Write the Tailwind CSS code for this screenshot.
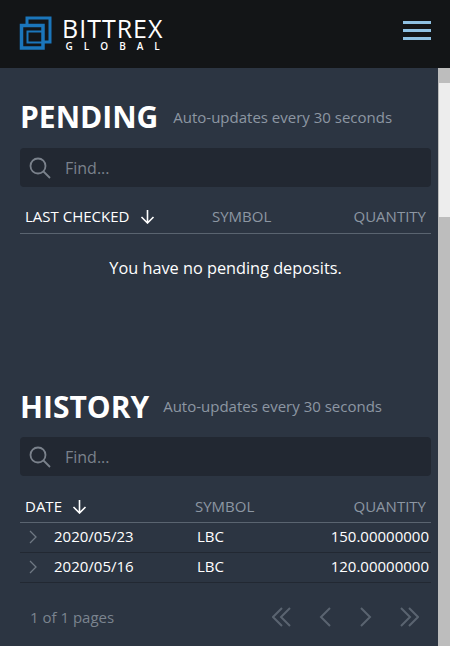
<!DOCTYPE html>
<html lang="en">
<head>
    <meta charset="UTF-8">
    <meta name="viewport" content="width=device-width, initial-scale=1.0">
    <title>Deposits</title>
    <script src="https://cdn.jsdelivr.net/npm/@tailwindcss/browser@4"></script>
</head>
<body class="bg-[#2c3542] font-['Open_Sans',sans-serif] overflow-hidden">
    <div class="w-[450px] h-[646px] flex flex-col overflow-hidden">
        <header class="h-[68px] shrink-0 bg-[#131517] flex items-center justify-between pl-[19px] pr-[20px]">
            <div class="flex items-center gap-[10px]">
                <svg width="33" height="34" viewBox="0 0 33 34" fill="none" stroke="#1b76bb" class="mt-[-3px]">
                    <path d="M8 8V2h23v24h-7" stroke-width="3"/>
                    <path d="M2.500 9.500h21.500v22.500H2.500z" stroke-width="3.500"/>
                    <path d="M24 15.500H8.500V26.500H24" stroke-width="2"/>
                </svg>
                <div class="flex flex-col items-center text-white mt-[-2px]">
                    <span class="text-[25px] leading-[26px] font-normal tracking-[1px]">BITTREX</span>
                    <span class="text-[10px] leading-[10px] font-semibold tracking-[11px] mr-[-11px]">GLOBAL</span>
                </div>
            </div>
            <div class="flex flex-col gap-[5px] w-[28px] mt-[-8px] mr-[-1px]">
                <div class="h-[3px] bg-[#8fc1e3]"></div>
                <div class="h-[3px] bg-[#8fc1e3]"></div>
                <div class="h-[3px] bg-[#8fc1e3]"></div>
            </div>
        </header>
        <div class="flex flex-1 min-h-0">
            <main class="w-[438px] shrink-0 pl-[20px] pr-[7px]">
                <section class="h-[319px] pt-[29px]">
                    <div class="flex items-center gap-[15px] h-[40px]">
                        <h1 class="text-[30px] font-bold text-white leading-[40px]">PENDING</h1>
                        <span class="text-[15px] text-[#8d97a3]">Auto-updates every 30 seconds</span>
                    </div>
                    <div class="mt-[11px] h-[39px] bg-[#222832] rounded flex items-center pl-[9px] gap-[14px]">
                        <svg width="22" height="22" viewBox="0 0 22 22" fill="none" stroke="#7b828c" stroke-width="1.800">
                            <circle cx="9" cy="9" r="7.500"/>
                            <path d="M14.500 14.500l6.500 6.500"/>
                        </svg>
                        <span class="text-[16px] text-[#7b828c]">Find...</span>
                    </div>
                    <div class="mt-[15px] h-[32px] border-b border-[#5a6470] flex items-center text-[15px] pb-[2px]">
                        <div class="w-[185px] pl-[5px] text-white flex items-center gap-[11px]">
                            LAST CHECKED
                            <svg width="15" height="15" viewBox="0 0 15 15" fill="none" stroke="#fff" stroke-width="1.600"><path d="M7.500 1v13M1.500 8l6 6 6-6"/></svg>
                        </div>
                        <div class="text-[#8d97a3] pl-[7px]">SYMBOL</div>
                        <div class="flex-1 text-right pr-[5px] text-[#8d97a3]">QUANTITY</div>
                    </div>
                    <p class="mt-[22px] text-center text-white text-[16.300px] leading-[24px]">You have no pending deposits.</p>
                </section>
                <section>
                    <div class="flex items-center gap-[14px] h-[40px]">
                        <h2 class="text-[30px] font-bold text-white leading-[40px]">HISTORY</h2>
                        <span class="text-[15px] text-[#8d97a3] mt-[-1px]">Auto-updates every 30 seconds</span>
                    </div>
                    <div class="mt-[10px] h-[39px] bg-[#222832] rounded flex items-center pl-[9px] gap-[14px]">
                        <svg width="22" height="22" viewBox="0 0 22 22" fill="none" stroke="#7b828c" stroke-width="1.800">
                            <circle cx="9" cy="9" r="7.500"/>
                            <path d="M14.500 14.500l6.500 6.500"/>
                        </svg>
                        <span class="text-[16px] text-[#7b828c]">Find...</span>
                    </div>
                    <div class="mt-[16px] h-[31px] border-b border-[#5a6470] flex items-center text-[15px] pb-[1px]">
                        <div class="w-[167px] pl-[5px] text-white flex items-center gap-[10px]">
                            DATE
                            <svg width="15" height="15" viewBox="0 0 15 15" fill="none" stroke="#fff" stroke-width="1.600"><path d="M7.500 1v13M1.500 8l6 6 6-6"/></svg>
                        </div>
                        <div class="text-[#8d97a3] pl-[8px]">SYMBOL</div>
                        <div class="flex-1 text-right pr-[5px] text-[#8d97a3]">QUANTITY</div>
                    </div>
                    <div class="h-[30px] border-b border-[#222832] flex items-center text-[15px] text-white pb-[2px]">
                        <svg width="8" height="14" viewBox="0 0 8 14" fill="none" stroke="#6f7883" stroke-width="1.300" class="ml-[9px]"><path d="M1 1l6 6-6 6"/></svg>
                        <span class="ml-[17px] w-[143px]">2020/05/23</span>
                        <span>LBC</span>
                        <span class="flex-1 text-right pr-[2px]">150.00000000</span>
                    </div>
                    <div class="h-[30px] border-b border-[#222832] flex items-center text-[15px] text-white pb-[2px]">
                        <svg width="8" height="14" viewBox="0 0 8 14" fill="none" stroke="#6f7883" stroke-width="1.300" class="ml-[9px]"><path d="M1 1l6 6-6 6"/></svg>
                        <span class="ml-[17px] w-[143px]">2020/05/16</span>
                        <span>LBC</span>
                        <span class="flex-1 text-right pr-[2px]">120.00000000</span>
                    </div>
                    <div class="mt-[19px] h-[30px] flex items-center justify-between pl-[10px] pr-[12px]">
                        <span class="text-[15px] text-[#7b848f]">1 of 1 pages</span>
                        <div class="flex items-center gap-[27px]">
                            <svg width="19" height="20" viewBox="0 0 19 20" fill="none" stroke="#5a6470" stroke-width="2"><path d="M10 1l-9 9 9 9M18 1l-9 9 9 9"/></svg>
                            <svg width="13" height="20" viewBox="0 0 13 20" fill="none" stroke="#5a6470" stroke-width="2"><path d="M12 1l-9 9 9 9"/></svg>
                            <svg width="13" height="20" viewBox="0 0 13 20" fill="none" stroke="#5a6470" stroke-width="2" class="ml-[2px]"><path d="M1 1l9 9-9 9"/></svg>
                            <svg width="19" height="20" viewBox="0 0 19 20" fill="none" stroke="#5a6470" stroke-width="2"><path d="M1 1l9 9-9 9M9 1l9 9-9 9"/></svg>
                        </div>
                    </div>
                </section>
            </main>
            <div class="w-[12px] bg-[#bdbdbd] pt-[15px]">
                <div class="h-[134px] bg-[#ededed] ml-[1px]"></div>
            </div>
        </div>
    </div>
</body>
</html>
